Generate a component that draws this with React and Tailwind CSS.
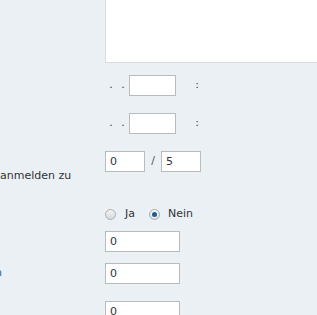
import React from 'react';

const font = { fontFamily: 'Verdana, "DejaVu Sans", sans-serif' };

const TextBox = ({ value = '', width = 'w-[75px]' }) => (
  <input
    type="text"
    defaultValue={value}
    className={`${width} h-[21px] border border-[#b8bcbf] bg-white pl-[4px] text-[11px] text-[#333] outline-none`}
    style={font}
  />
);

const Radio = ({ checked }) => (
  <span className="flex h-[11px] w-[11px] items-center justify-center rounded-full border border-[#a9adb0] bg-gradient-to-b from-[#f4f4f4] to-[#d6d8da]">
    {checked && (
      <span className="h-[5px] w-[5px] rounded-full bg-[#1b5d8c] shadow-[0_0_0_1px_#eef3f6]" />
    )}
  </span>
);

const DateTimeRow = ({ top }) => (
  <div className={`flex h-[21px] items-center ${top}`}>
    <div className="w-[105px]" />
    <span className="w-[12px] text-center text-[#444]">.</span>
    <span className="w-[12px] text-center text-[#444]">.</span>
    <TextBox width="w-[47px]" />
    <span className="ml-[15px] w-[12px] text-center text-[#444]">:</span>
  </div>
);

const App = () => {
  return (
    <div className="h-[315px] w-[317px] overflow-hidden bg-[#eaf0f4] text-[11px] text-[#333]" style={font}>
      <div className="flex">
        <div className="w-[105px]" />
        <div className="h-[63px] flex-1 border-b border-l border-[#d6dde2] bg-white" />
      </div>

      <DateTimeRow top="mt-[12px]" />
      <DateTimeRow top="mt-[17px]" />

      <div className="mt-[17px] flex h-[21px] items-start">
        <div className="w-[105px] whitespace-nowrap pt-[18px] leading-[13px]">anmelden zu</div>
        <div className="flex h-[21px] items-center">
          <TextBox value="0" width="w-[40px]" />
          <span className="w-[16px] text-center text-[#555]">/</span>
          <TextBox value="5" width="w-[40px]" />
        </div>
      </div>

      <div className="mt-[35px] flex h-[14px] items-center">
        <div className="w-[105px]" />
        <Radio />
        <span className="ml-[9px]">Ja</span>
        <span className="ml-[14px]"><Radio checked /></span>
        <span className="ml-[8px]">Nein</span>
      </div>

      <div className="mt-[10px] flex h-[21px] items-center">
        <div className="w-[105px]" />
        <TextBox value="0" />
      </div>

      <div className="mt-[11px] flex h-[21px] items-center">
        <div className="w-[105px] overflow-hidden">
          <div className="-ml-[150px] w-[152px] whitespace-nowrap text-right text-[#1d5f9e]">Leistungen anzeigen</div>
        </div>
        <TextBox value="0" />
      </div>

      <div className="mt-[17px] flex h-[21px] items-center">
        <div className="w-[105px]" />
        <TextBox value="0" />
      </div>
    </div>
  );
};

export default App;
